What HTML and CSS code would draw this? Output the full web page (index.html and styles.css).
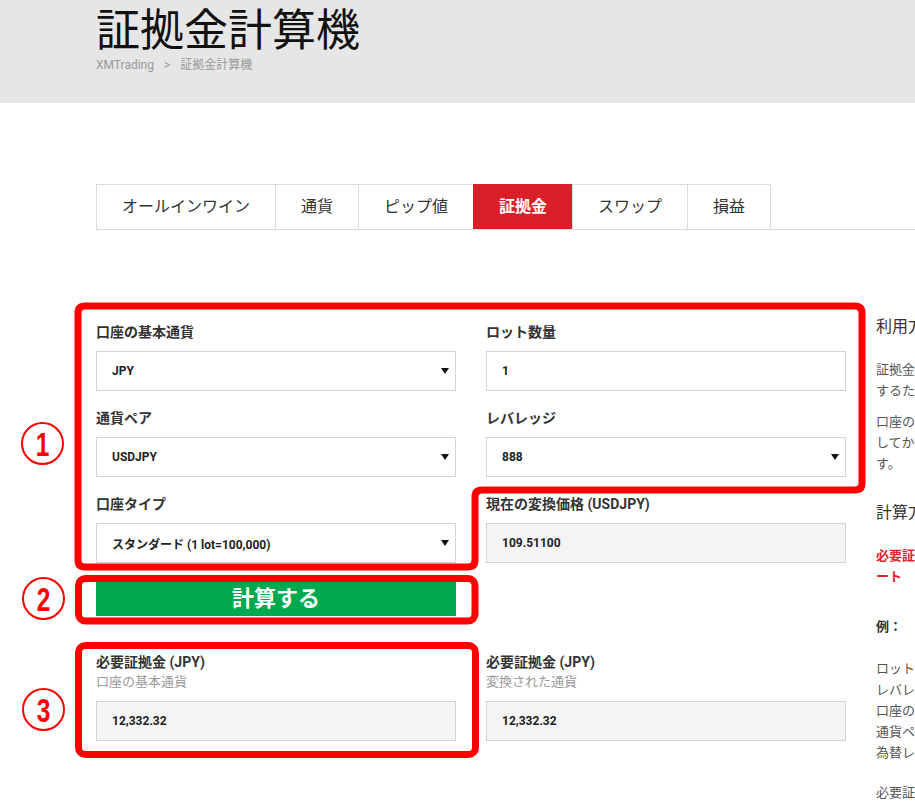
FILE: index.html
```html
<!DOCTYPE html>
<html lang="ja">
<head>
<meta charset="utf-8">
<title>証拠金計算機</title>
<link rel="stylesheet" href="styles.css">
</head>
<body>
<header class="page-header">
  <div class="container">
    <h1 class="title">証拠金計算機</h1>
    <div class="breadcrumb"><span>XMTrading</span><span class="sep">&gt;</span><span>証拠金計算機</span></div>
  </div>
</header>
<main class="container">
  <nav class="tabs">
    <a class="tab">オールインワイン</a>
    <a class="tab">通貨</a>
    <a class="tab">ピップ値</a>
    <a class="tab active">証拠金</a>
    <a class="tab">スワップ</a>
    <a class="tab">損益</a>
  </nav>
  <section class="content">
    <form class="calc">
      <div class="group">
        <label class="label">口座の基本通貨</label>
        <div class="field select"><span>JPY</span><span class="arrow"></span></div>
      </div>
      <div class="group">
        <label class="label">ロット数量</label>
        <div class="field"><span>1</span></div>
      </div>
      <div class="group">
        <label class="label">通貨ペア</label>
        <div class="field select"><span>USDJPY</span><span class="arrow"></span></div>
      </div>
      <div class="group">
        <label class="label">レバレッジ</label>
        <div class="field select"><span>888</span><span class="arrow"></span></div>
      </div>
      <div class="group">
        <label class="label">口座タイプ</label>
        <div class="field select"><span>スタンダード (1 lot=100,000)</span><span class="arrow"></span></div>
      </div>
      <div class="group">
        <label class="label">現在の変換価格 (USDJPY)</label>
        <div class="field readonly"><span>109.51100</span></div>
      </div>
      <button type="button" class="calc-btn">計算する</button>
      <div class="group result result-left">
        <label class="label tight">必要証拠金 (JPY)</label>
        <div class="sublabel">口座の基本通貨</div>
        <div class="field readonly"><span>12,332.32</span></div>
      </div>
      <div class="group result result-right">
        <label class="label tight">必要証拠金 (JPY)</label>
        <div class="sublabel">変換された通貨</div>
        <div class="field readonly"><span>12,332.32</span></div>
      </div>
    </form>
    <aside class="info">
      <h3 class="info-title">利用方法</h3>
      <p>証拠金計算機は、ポジションを保有するのに必要な証拠金を計算<br>するためのツールです。</p>
      <p class="p-gap">口座の基本通貨、通貨ペア、ロット数量、レバレッジを選択<br>してから「計算する」ボタンをクリックすると結果が表示されま<br>す。</p>
      <h3 class="info-title second">計算方法</h3>
      <p class="formula">必要証拠金＝ロット数量×契約サイズ÷レバレッジ×為替レ<br>ート</p>
      <p class="example">例：</p>
      <p class="list">ロット数量：1<br>レバレッジ：888<br>口座の基本通貨：JPY<br>通貨ペア：USDJPY<br>為替レート：109.511</p>
      <p>必要証拠金＝1×100,000÷888×109.511＝12,332.32 JPY</p>
    </aside>
  </section>
</main>

<svg class="annotations" width="915" height="801" viewBox="0 0 915 801" aria-hidden="true">
  <path d="M85,306 H855 Q862,306 862,313 V483 Q862,490 855,490 H482 Q475,490 475,497 V560 Q475,567 468,567 H85 Q78,567 78,560 V313 Q78,306 85,306 Z" />
  <rect x="78.5" y="578.5" width="396.5" height="42.5" rx="7" />
  <rect x="78.5" y="645.5" width="397" height="109" rx="7" />
</svg>
<div class="mark m1"><span>1</span></div>
<div class="mark m2"><span>2</span></div>
<div class="mark m3"><span>3</span></div>
</body>
</html>
```

FILE: styles.css
```css
html {
  overflow-x: hidden;
}

body {
  margin: 0;
  font-family: Roboto, "Noto Sans CJK JP", sans-serif;
  color: #333;
  background: #fff;
}

.container {
  width: 1200px;
  padding-left: 96px;
}

.page-header {
  background: #e6e6e6;
  height: 103px;
  box-sizing: border-box;
  padding-top: 9px;
}

.title {
  margin: 0;
  font-size: 44px;
  line-height: 44px;
  font-weight: 400;
  color: #111;
}

.breadcrumb {
  margin-top: 4px;
  font-size: 12px;
  line-height: 16px;
  color: #9a9a9a;
}

.sep {
  margin: 0 10px;
}

.tabs {
  margin-top: 81px;
  display: flex;
  border-bottom: 1px solid #dcdcdc;
}

.tab {
  display: block;
  padding: 0 25px;
  line-height: 44px;
  border: 1px solid #dcdcdc;
  border-bottom: none;
  font-size: 16px;
  color: #333;
  margin-left: -1px;
}

.tab:first-child {
  margin-left: 0;
}

.tab.active {
  background: #d9202a;
  border-color: #d9202a;
  color: #fff;
  font-weight: 700;
}

.content {
  display: flex;
  gap: 30px;
  margin-top: 85px;
}

.calc {
  flex: none;
  width: 750px;
  display: grid;
  grid-template-columns: 360px 360px;
  column-gap: 30px;
  row-gap: 17px;
  align-content: start;
  padding-top: 7px;
}

.label {
  display: block;
  font-size: 14px;
  line-height: 20px;
  font-weight: 700;
  color: #333;
  margin-bottom: 9px;
}

.label.tight {
  margin-bottom: 0;
}

.sublabel {
  font-size: 13px;
  line-height: 20px;
  color: #9a9a9a;
  margin-bottom: 9px;
}

.field {
  height: 40px;
  box-sizing: border-box;
  border: 1px solid #d4d4d4;
  padding: 0 15px;
  display: flex;
  align-items: center;
  font-size: 12px;
  font-weight: 700;
  color: #222;
  background: #fff;
}

.field.select {
  padding-right: 6px;
}

.field.readonly {
  background: #f4f4f4;
}

.arrow {
  margin-left: auto;
  width: 0;
  height: 0;
  border-left: 4px solid transparent;
  border-right: 4px solid transparent;
  border-top: 6px solid #111;
}

.calc-btn {
  grid-column: 1;
  margin-top: 2px;
  height: 34px;
  border: none;
  padding: 0;
  background: #00a84f;
  color: #fff;
  font-family: Roboto, "Noto Sans CJK JP", sans-serif;
  font-size: 22px;
  font-weight: 700;
  line-height: 34px;
}

.result {
  margin-top: 19px;
}

.result-left {
  grid-column: 1;
}

.result-right {
  grid-column: 2;
}

.info {
  flex: none;
  width: 420px;
}

.info-title {
  margin: 0 0 20px;
  font-size: 16px;
  line-height: 24px;
  font-weight: 400;
  color: #333;
}

.info-title.second {
  margin-top: 27px;
}

.info p {
  margin: 0 0 10px;
  font-size: 13px;
  line-height: 21px;
  color: #555;
  white-space: nowrap;
}

.info p.formula {
  color: #e0262d;
  font-weight: 700;
  margin-bottom: 29px;
}

.info p.example {
  color: #333;
  font-weight: 700;
  margin-bottom: 21px;
}

.info p.list {
  margin-bottom: 19px;
}

.annotations {
  position: absolute;
  top: 0;
  left: 0;
  pointer-events: none;
  fill: none;
  stroke: #ff0000;
  stroke-width: 7;
}

.mark {
  position: absolute;
  width: 39px;
  height: 39px;
  border: 2px solid #ff0000;
  border-radius: 50%;
  display: flex;
  align-items: center;
  justify-content: center;
  color: #ff0000;
  font-family: "Liberation Sans", sans-serif;
  font-size: 34px;
  font-weight: 700;
  line-height: 1;
}

.mark span {
  display: block;
  transform: scaleX(0.72);
}

.m1 {
  left: 21px;
  top: 422px;
}

.m2 {
  left: 22px;
  top: 577px;
}

.m3 {
  left: 22px;
  top: 688px;
}
```
